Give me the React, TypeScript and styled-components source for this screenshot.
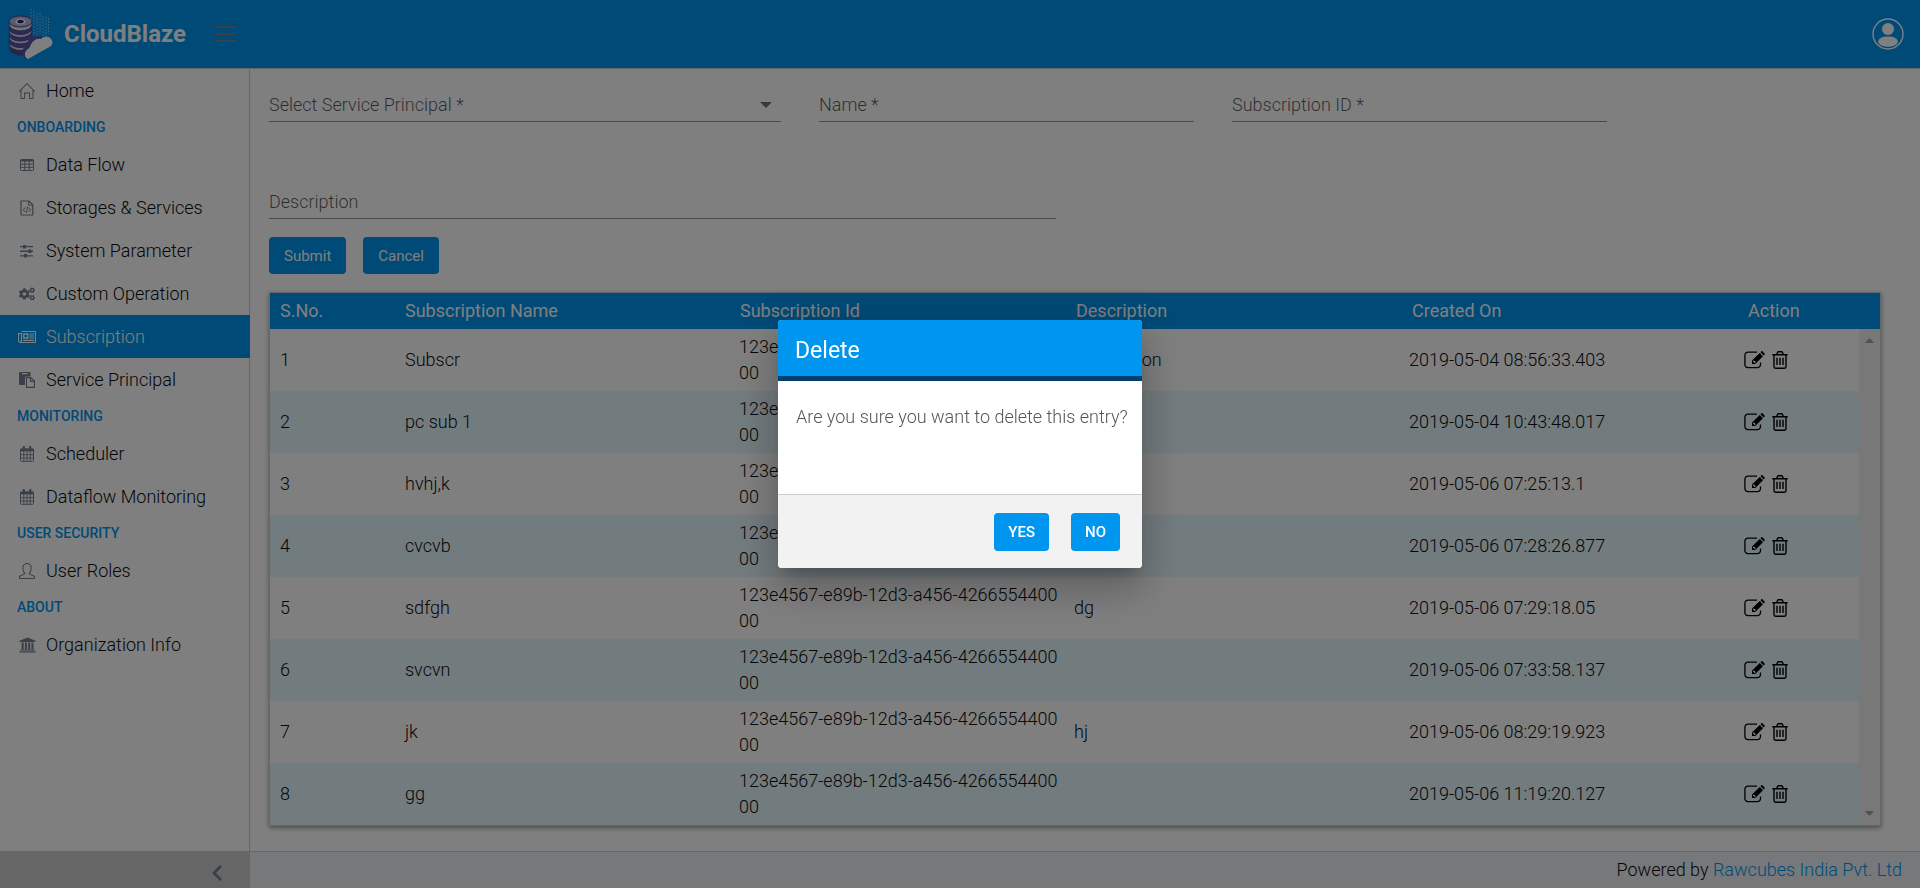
import React from 'react';
import styled, { createGlobalStyle } from 'styled-components';
import { SlHome, SlUser } from 'react-icons/sl';
import { FaChevronLeft, FaCogs } from 'react-icons/fa';

const blue = '#0095ee';
const line = '#c8ced3';
const ink = '#0a0c0e';
const hint = 'rgba(0, 0, 0, 0.66)';

const GlobalStyle = createGlobalStyle`
  *, *::before, *::after { box-sizing: border-box; }
  body {
    margin: 0;
    background: #fff;
    color: ${ink};
    font-family: Roboto, 'Liberation Sans', sans-serif;
    font-size: 18px;
    font-weight: 300;
    line-height: 26px;
  }
  button, input, select { font: inherit; }
`;

/* ---------- icons ---------- */

const Svg = styled.svg`
  display: block;
  flex: none;
`;

const TableIcon = () => (
  <Svg width="16" height="16" viewBox="0 0 16 16" fill="none" stroke="currentColor">
    <rect x="1.5" y="2.5" width="13" height="11" rx="1" />
    <path d="M1.5 3.5h13" strokeWidth="2" />
    <path d="M1.5 7.2h13M1.5 10.3h13M5.8 4v9.5M10.2 4v9.5" />
  </Svg>
);

const FileCodeIcon = () => (
  <Svg width="16" height="16" viewBox="0 0 16 16" fill="none" stroke="currentColor">
    <path d="M2 1h8l3.800 3.800V15H2z" strokeWidth="1.200" />
    <path d="M9.600 1v4.200h4.200" />
    <path d="M6.200 7.500L4.300 9.800l1.900 2.300M9.800 7.500l1.900 2.300-1.900 2.300M8.600 6.800l-1.200 6" />
  </Svg>
);

const SlidersIcon = () => (
  <Svg width="16" height="16" viewBox="0 0 16 16" fill="currentColor">
    <path d="M1 3h13v1.300H1zM1 7.600h13v1.300H1zM1 12.200h13v1.300H1z" />
    <path d="M4 1.900h3v3.500H4zM9.300 6.500h3V10h-3zM5 11.100h3v3.500H5z" />
  </Svg>
);

const NewspaperIcon = () => (
  <Svg width="18" height="16" viewBox="0 0 18 16" fill="none" stroke="currentColor" strokeWidth="1.200">
    <path d="M3.500 2.500h14v11h-15a2 2 0 0 1-2-2v-7h3v7.500a1.400 1.400 0 0 1-1.400 1.400" />
    <rect x="5.800" y="5" width="4" height="4" strokeWidth="1.400" />
    <path d="M11.500 5h4.500M11.500 7h4.500M11.500 9h4.500M5.200 11.400H16" />
  </Svg>
);

const PasteIcon = () => (
  <Svg width="16" height="16" viewBox="0 0 16 16" fill="currentColor">
    <path fillRule="evenodd" d="M1 0h9.500a1 1 0 0 1 1 1v3.500H8A1.500 1.500 0 0 0 6 6v7H1a1 1 0 0 1-1-1V1a1 1 0 0 1 1-1zm2 .9v1.300h5.500V.9z" />
    <path d="M7.500 5.600h4.300l3.600 3.500v6.300H7.500z M11.500 5.600v3.800h3.900" fill="none" stroke="currentColor" strokeWidth="1.100" />
  </Svg>
);

const CalendarIcon = () => (
  <Svg width="16" height="16" viewBox="0 0 16 16" fill="none" stroke="currentColor">
    <rect x="1.500" y="3" width="13" height="12.300" rx=".8" />
    <path d="M1.500 4h13" strokeWidth="2.600" />
    <path d="M4.800 1v3.500M11.200 1v3.500" strokeWidth="2.200" strokeLinecap="round" />
    <path d="M1.500 8.700h13M1.500 12h13M4.800 5v10M8 5v10M11.200 5v10" strokeWidth=".9" />
  </Svg>
);

const BankIcon = () => (
  <Svg width="17" height="16" viewBox="0 0 17 16" fill="currentColor">
    <path d="M8.500.5L16.500 3.700v1.200H.5V3.700zM2.600 5.600h2.100v6.600H2.600zM5.900 5.600H8v6.600H5.900zM9.100 5.600h2.100v6.600H9.100zM12.400 5.600h2.100v6.600h-2.100zM1.400 12.500h14.200v1H1.400zM.5 14.200h16v1.300H.5z" />
  </Svg>
);

const EditIcon = () => (
  <Svg width="22" height="18" viewBox="0 0 22 18">
    <path d="M13 1.200H4A3 3 0 0 0 .9 4.200v9.400A3 3 0 0 0 4 16.600h9.400a3 3 0 0 0 3.100-3V11.500" fill="none" stroke="currentColor" strokeWidth="1.300" />
    <path fillRule="evenodd" d="M8 9.600l7.700-7.700 3.300 3.300-7.700 7.700H8zM9 10v1h1v1h1l.8-.8-2-2zM16.400 1.200l.8-.8c.4-.4 1-.4 1.400 0l1.900 1.900c.4.400.4 1 0 1.400l-.8.8z" fill="currentColor" />
  </Svg>
);

const TrashIcon = () => (
  <Svg width="16" height="18" viewBox="0 0 16 18" fill="none" stroke="currentColor" strokeWidth="1.400">
    <path d="M.3 3.700h15.400M2 3.700v11.900c0 .9.600 1.600 1.500 1.600h9c.9 0 1.500-.7 1.500-1.600V3.700" />
    <path d="M4.700 3.500l.8-2c.2-.5.500-.7 1-.7h3c.5 0 .8.200 1 .7l.8 2" />
    <path d="M5 6.800v7.200M8 6.800v7.200M11 6.800v7.200" />
  </Svg>
);

const MenuIcon = () => (
  <Svg width="22" height="18" viewBox="0 0 22 18" stroke="currentColor" strokeWidth="2" strokeLinecap="round">
    <path d="M1 2h20M1 9h20M1 16h20" />
  </Svg>
);

const AvatarIcon = () => (
  <Svg width="32" height="32" viewBox="0 0 32 32" fill="#fff">
    <circle cx="16" cy="16" r="15" fill="none" stroke="#fff" strokeWidth="1.400" />
    <circle cx="16" cy="11" r="6" />
    <path d="M16 18.500c6 0 9.800 2 9.800 5.200 0 2.800-4.500 5-9.800 5s-9.800-2.200-9.800-5c0-3.200 3.800-5.200 9.800-5.200z" />
  </Svg>
);

const LogoMark = () => (
  <Svg width="46" height="52" viewBox="0 0 46 52">
    <g fill="none" stroke="#6fc4f5" strokeWidth="1" strokeDasharray="2 1">
      <path d="M23 1v26M26 3v26M29 5v24M32 4v22M35 8v20M38 9v20M40.500 10v16" />
    </g>
    <g fill="#4d4a9c">
      <path d="M1 34v6c0 4 5 7 12 8l8-3V34z" />
      <path d="M1 26v7c0 4 5 6 12 6s11-2 11-6v-7z" />
    </g>
    <g stroke="#4a4690" strokeWidth="1">
      <ellipse cx="12.500" cy="36" rx="11.500" ry="6.500" fill="#d5d2ee" />
      <ellipse cx="12.500" cy="33.500" rx="11.500" ry="6" fill="#5b57a6" />
      <ellipse cx="12.500" cy="29.500" rx="11.500" ry="6.500" fill="#d5d2ee" />
      <ellipse cx="12.500" cy="27" rx="11.500" ry="6" fill="#5b57a6" />
      <ellipse cx="12.500" cy="23" rx="11.500" ry="6.500" fill="#d5d2ee" />
      <ellipse cx="12.500" cy="20.500" rx="11.500" ry="6" fill="#5b57a6" />
      <ellipse cx="12.500" cy="16.500" rx="11.500" ry="6.500" fill="#e6e4f6" />
      <ellipse cx="12.500" cy="13.500" rx="11.500" ry="5.500" fill="#b7b4dc" />
    </g>
    <ellipse cx="12.500" cy="13.500" rx="5" ry="3" fill="#fff" />
    <ellipse cx="12.500" cy="13.500" rx="3.200" ry="1.800" fill="#2b2776" />
    <path d="M14 44c0-4 4-5 5-7 1-7 5-10 10-9l7 1-17 22c-3 0-5-3-5-7z" fill="#5b57a6" />
    <path d="M20 51c-3-1-4-5-2-8 1-2 3-2 4-4 2-6 6-9 11-8 3-3 8-3 10 0 2 2 2 5 0 7z" fill="#fff" />
  </Svg>
);

/* ---------- shell ---------- */

const Page = styled.div`
  display: flex;
  flex-direction: column;
  min-height: 100vh;
`;

const Header = styled.header`
  display: flex;
  align-items: center;
  height: 69px;
  padding: 0 16px 0 8px;
  background: ${blue};
  border-bottom: 1px solid ${line};
`;

const Brand = styled.a`
  display: flex;
  align-items: center;
  gap: 10px;
  width: 206px;
  color: #fff;
  font-size: 24px;
  font-weight: 700;
  text-decoration: none;
`;

const PlainButton = styled.button`
  display: flex;
  padding: 0;
  border: 0;
  background: none;
  color: ${(p) => p.color || '#000'};
  cursor: pointer;
`;

const ProfileButton = styled(PlainButton)`
  margin-left: auto;
`;

const Columns = styled.div`
  display: flex;
  flex: 1;
`;

const Sidebar = styled.nav`
  display: flex;
  flex-direction: column;
  flex: none;
  width: 250px;
`;

const NavList = styled.div`
  flex: 1;
  border-right: 1px solid ${line};
`;

const NavHeading = styled.h2`
  margin: 0;
  padding: 0 17px;
  color: ${blue};
  font-size: 14px;
  font-weight: 500;
  line-height: 31px;
`;

const NavLink = styled.a<{ $active?: boolean }>`
  display: flex;
  align-items: center;
  gap: 10px;
  height: 43px;
  margin-right: ${(p) => (p.$active ? '-1px' : '0')};
  padding: 0 18px;
  background: ${(p) => (p.$active ? blue : 'transparent')};
  color: ${(p) => (p.$active ? '#fff' : ink)};
  text-decoration: none;
`;

const NavIcon = styled.span<{ $active?: boolean }>`
  display: flex;
  justify-content: center;
  flex: none;
  width: 18px;
  color: ${(p) => (p.$active ? '#fff' : '#73818f')};
  font-size: 16px;
`;

const Collapse = styled.button`
  display: flex;
  align-items: center;
  justify-content: flex-end;
  height: 37px;
  padding: 6px 24px 0 0;
  border: 0;
  background: #ccc;
  color: #73818f;
`;

const Main = styled.div`
  display: flex;
  flex-direction: column;
  flex: 1;
  min-width: 0;
`;

const Content = styled.main`
  flex: 1;
  padding: 20px 39px 25px 19px;
`;

const Footer = styled.footer`
  height: 37px;
  padding: 5px 18px;
  border-top: 1px solid ${line};
  background: #eff1f4;
  text-align: right;

  a {
    color: ${blue};
    text-decoration: none;
  }
`;

/* ---------- form ---------- */

const Form = styled.form`
  display: flex;
  flex-direction: column;
  gap: 18px;
  margin-bottom: 18px;
`;

const Fields = styled.div`
  display: grid;
  grid-template-columns: 512fr 375fr 375fr 236fr;
  gap: 64px 38px;
`;

const WideField = styled.div`
  grid-column: 1 / -1;
  display: grid;
  grid-template-columns: 787fr 825fr;
`;

const SelectWrap = styled.div`
  position: relative;

  svg {
    position: absolute;
    right: 9px;
    top: 13px;
    pointer-events: none;
  }
`;

const fieldStyle = `
  display: block;
  width: 100%;
  height: 33px;
  border: 0;
  border-bottom: 1px solid rgba(0, 0, 0, 0.42);
  border-radius: 0;
  outline: 0;
  background: transparent;
  color: ${hint};
`;

const Select = styled.select`
  ${fieldStyle}
  padding: 0;
  appearance: none;
`;

const Input = styled.input`
  ${fieldStyle}
  padding: 0 0 2px;

  &::placeholder {
    color: ${hint};
    opacity: 1;
  }
`;

const Actions = styled.div`
  display: flex;
  gap: 17px;
`;

const Button = styled.button`
  height: 37px;
  padding: 0 15px;
  border: 0;
  border-radius: 4px;
  background: ${blue};
  color: #fff;
  font-size: 15px;
  font-weight: 400;
`;

const DialogButton = styled(Button)`
  height: 38px;
  padding: 0 14px;
  font-weight: 500;
`;

/* ---------- table ---------- */

const Card = styled.div`
  position: relative;
  border: 1px solid ${line};
  box-shadow: 0 2px 5px rgba(0, 0, 0, 0.4);
`;

const Table = styled.table`
  display: block;
`;

const Thead = styled.thead`
  display: block;
  background: ${blue};
  color: #fff;
`;

const Tbody = styled.tbody`
  display: block;
  margin-right: 21px;
`;

const HeadRow = styled.tr`
  display: grid;
  grid-template-columns: 125fr 335fr repeat(3, 336fr) 142fr;
  height: 36px;
  align-items: center;
`;

const Row = styled.tr`
  display: grid;
  grid-template-columns: 125fr 334fr repeat(3, 335fr) 125fr;
  align-items: center;
  min-height: 62px;

  &:nth-child(even) {
    background: #e5f7fd;
  }
`;

const Th = styled.th`
  padding: 0 2px 0 10px;
  font-weight: 400;
  text-align: left;
`;

const Td = styled.td`
  padding: 5px 2px 5px 10px;
  word-break: break-all;
`;

const RowActions = styled.div`
  display: flex;
  align-items: center;
  gap: 6px;
`;

const ScrollTrack = styled.div`
  position: absolute;
  top: 36px;
  right: 0;
  bottom: 0;
  display: flex;
  flex-direction: column;
  align-items: center;
  justify-content: space-between;
  width: 21px;
  padding: 9px 0;
  background: #f1f1f1;
  color: #a3a3a3;
`;

/* ---------- dialog ---------- */

const Backdrop = styled.div`
  position: fixed;
  inset: 0;
  display: flex;
  align-items: center;
  justify-content: center;
  background: rgba(0, 0, 0, 0.5);
`;

const Dialog = styled.div`
  width: 364px;
  border-radius: 4px;
  overflow: hidden;
  background: #fff;
  box-shadow:
    0 11px 15px -7px rgba(0, 0, 0, 0.2),
    0 24px 38px 3px rgba(0, 0, 0, 0.14),
    0 9px 46px 8px rgba(0, 0, 0, 0.12);
`;

const DialogTitle = styled.h1`
  margin: 0;
  padding: 16px 17px 10px;
  border-bottom: 5px solid #003f6e;
  background: ${blue};
  color: #fff;
  font-size: 23px;
  font-weight: 400;
  line-height: 30px;
`;

const DialogBody = styled.p`
  min-height: 113px;
  margin: 0;
  padding: 23px 8px 23px 18px;
  color: #555;
`;

const DialogFooter = styled.div`
  display: flex;
  justify-content: flex-end;
  gap: 22px;
  padding: 18px 22px 17px;
  border-top: 1px solid ${line};
  background: #f2f2f2;
`;

/* ---------- data ---------- */

type NavEntry = { label: string; icon: React.ReactNode; active?: boolean };

const navGroups: { title?: string; items: NavEntry[] }[] = [
  { items: [{ label: 'Home', icon: <SlHome /> }] },
  {
    title: 'ONBOARDING',
    items: [
      { label: 'Data Flow', icon: <TableIcon /> },
      { label: 'Storages & Services', icon: <FileCodeIcon /> },
      { label: 'System Parameter', icon: <SlidersIcon /> },
      { label: 'Custom Operation', icon: <FaCogs /> },
      { label: 'Subscription', icon: <NewspaperIcon />, active: true },
      { label: 'Service Principal', icon: <PasteIcon /> },
    ],
  },
  {
    title: 'MONITORING',
    items: [
      { label: 'Scheduler', icon: <CalendarIcon /> },
      { label: 'Dataflow Monitoring', icon: <CalendarIcon /> },
    ],
  },
  { title: 'USER SECURITY', items: [{ label: 'User Roles', icon: <SlUser /> }] },
  { title: 'ABOUT', items: [{ label: 'Organization Info', icon: <BankIcon /> }] },
];

const headings = ['S.No.', 'Subscription Name', 'Subscription Id', 'Description', 'Created On', 'Action'];

const subscriptionId = '123e4567-e89b-12d3-a456-426655440000';

const rows = [
  { name: 'Subscr', description: 'description', created: '2019-05-04 08:56:33.403' },
  { name: 'pc sub 1', description: '', created: '2019-05-04 10:43:48.017' },
  { name: 'hvhj,k', description: '', created: '2019-05-06 07:25:13.1' },
  { name: 'cvcvb', description: '', created: '2019-05-06 07:28:26.877' },
  { name: 'sdfgh', description: 'dg', created: '2019-05-06 07:29:18.05' },
  { name: 'svcvn', description: '', created: '2019-05-06 07:33:58.137' },
  { name: 'jk', description: 'hj', created: '2019-05-06 08:29:19.923' },
  { name: 'gg', description: '', created: '2019-05-06 11:19:20.127' },
];

export default function App() {
  return (
    <>
      <GlobalStyle />
      <Page>
        <Header>
          <Brand href="#">
            <LogoMark />
            CloudBlaze
          </Brand>
          <PlainButton type="button" color="#73818f" aria-label="Toggle menu">
            <MenuIcon />
          </PlainButton>
          <ProfileButton type="button" aria-label="Profile">
            <AvatarIcon />
          </ProfileButton>
        </Header>

        <Columns>
          <Sidebar>
            <NavList>
              {navGroups.map((group, i) => (
                <React.Fragment key={i}>
                  {group.title && <NavHeading>{group.title}</NavHeading>}
                  {group.items.map((item) => (
                    <NavLink key={item.label} href="#" $active={item.active}>
                      <NavIcon $active={item.active}>{item.icon}</NavIcon>
                      {item.label}
                    </NavLink>
                  ))}
                </React.Fragment>
              ))}
            </NavList>
            <Collapse type="button" aria-label="Collapse sidebar">
              <FaChevronLeft size={18} />
            </Collapse>
          </Sidebar>

          <Main>
            <Content>
              <Form onSubmit={(e) => e.preventDefault()}>
                <Fields>
                  <SelectWrap>
                    <Select aria-label="Service Principal" defaultValue="">
                      <option value="">Select Service Principal *</option>
                    </Select>
                    <Svg width="12" height="6" viewBox="0 0 12 6" fill="rgba(0,0,0,.54)">
                      <path d="M0 0h12L6 6z" />
                    </Svg>
                  </SelectWrap>
                  <Input aria-label="Name" placeholder="Name *" />
                  <Input aria-label="Subscription ID" placeholder="Subscription ID *" />
                  <WideField>
                    <Input aria-label="Description" placeholder="Description" />
                  </WideField>
                </Fields>
                <Actions>
                  <Button type="submit">Submit</Button>
                  <Button type="button">Cancel</Button>
                </Actions>
              </Form>

              <Card>
                <Table>
                  <Thead>
                    <HeadRow>
                      {headings.map((h) => (
                        <Th key={h} scope="col">{h}</Th>
                      ))}
                    </HeadRow>
                  </Thead>
                  <Tbody>
                    {rows.map((row, i) => (
                      <Row key={row.name}>
                        <Td>{i + 1}</Td>
                        <Td>{row.name}</Td>
                        <Td>{subscriptionId}</Td>
                        <Td>{row.description}</Td>
                        <Td>{row.created}</Td>
                        <Td>
                          <RowActions>
                            <PlainButton type="button" aria-label="Edit">
                              <EditIcon />
                            </PlainButton>
                            <PlainButton type="button" aria-label="Delete">
                              <TrashIcon />
                            </PlainButton>
                          </RowActions>
                        </Td>
                      </Row>
                    ))}
                  </Tbody>
                </Table>
                <ScrollTrack aria-hidden="true">
                  <Svg width="9" height="5" viewBox="0 0 9 5" fill="currentColor">
                    <path d="M0 5h9L4.500 0z" />
                  </Svg>
                  <Svg width="9" height="5" viewBox="0 0 9 5" fill="currentColor">
                    <path d="M0 0h9L4.500 5z" />
                  </Svg>
                </ScrollTrack>
              </Card>
            </Content>

            <Footer>
              Powered by <a href="#">Rawcubes India Pvt. Ltd</a>
            </Footer>
          </Main>
        </Columns>
      </Page>

      <Backdrop>
        <Dialog role="dialog" aria-modal="true" aria-labelledby="dialog-title">
          <DialogTitle id="dialog-title">Delete</DialogTitle>
          <DialogBody>Are you sure you want to delete this entry?</DialogBody>
          <DialogFooter>
            <DialogButton type="button">YES</DialogButton>
            <DialogButton type="button">NO</DialogButton>
          </DialogFooter>
        </Dialog>
      </Backdrop>
    </>
  );
}
